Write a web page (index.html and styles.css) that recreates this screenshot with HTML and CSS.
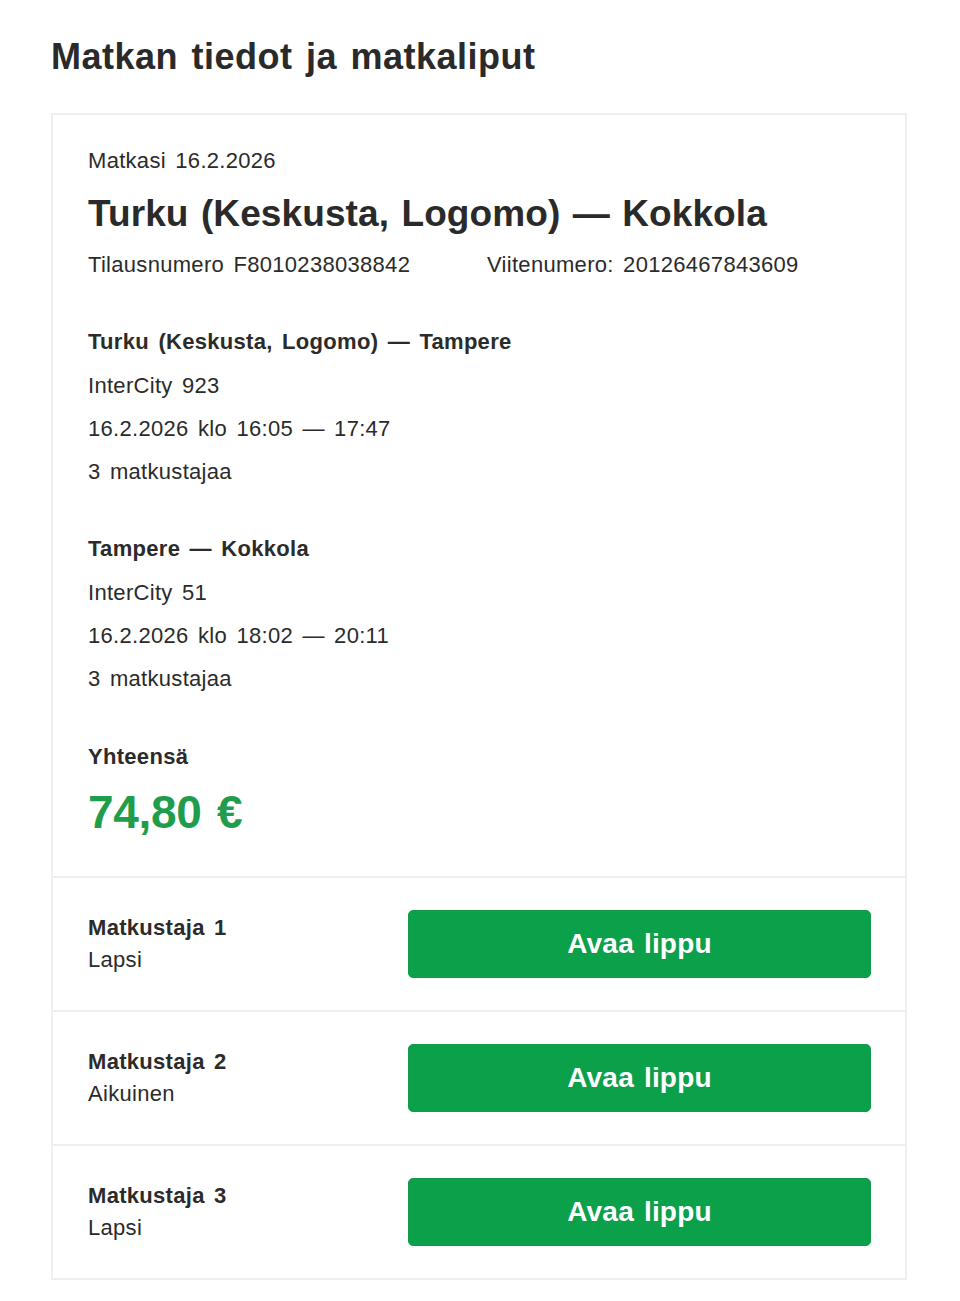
FILE: index.html
```html
<!DOCTYPE html>
<html lang="fi">
<head>
<meta charset="utf-8">
<title>Matkan tiedot ja matkaliput</title>
<link rel="stylesheet" href="styles.css">
</head>
<body>
<main class="page">
  <h1 class="page-title">Matkan tiedot ja matkaliput</h1>
  <section class="card">
    <div class="summary">
      <div class="trip-date">Matkasi 16.2.2026</div>
      <h2 class="trip-route">Turku (Keskusta, Logomo) — Kokkola</h2>
      <div class="refs">
        <span class="ref-order">Tilausnumero F8010238038842</span>
        <span class="ref-ref">Viitenumero: 20126467843609</span>
      </div>

      <div class="leg">
        <div class="leg-title">Turku (Keskusta, Logomo) — Tampere</div>
        <div class="leg-line">InterCity 923</div>
        <div class="leg-line">16.2.2026 klo 16:05 — 17:47</div>
        <div class="leg-line">3 matkustajaa</div>
      </div>

      <div class="leg">
        <div class="leg-title">Tampere — Kokkola</div>
        <div class="leg-line">InterCity 51</div>
        <div class="leg-line">16.2.2026 klo 18:02 — 20:11</div>
        <div class="leg-line">3 matkustajaa</div>
      </div>

      <div class="total">
        <div class="total-label">Yhteensä</div>
        <div class="total-price">74,80 €</div>
      </div>
    </div>

    <div class="passenger">
      <div class="passenger-info">
        <div class="passenger-name">Matkustaja 1</div>
        <div class="passenger-type">Lapsi</div>
      </div>
      <button class="ticket-btn" type="button">Avaa lippu</button>
    </div>
    <div class="passenger">
      <div class="passenger-info">
        <div class="passenger-name">Matkustaja 2</div>
        <div class="passenger-type">Aikuinen</div>
      </div>
      <button class="ticket-btn" type="button">Avaa lippu</button>
    </div>
    <div class="passenger">
      <div class="passenger-info">
        <div class="passenger-name">Matkustaja 3</div>
        <div class="passenger-type">Lapsi</div>
      </div>
      <button class="ticket-btn" type="button">Avaa lippu</button>
    </div>
  </section>
</main>
</body>
</html>
```

FILE: styles.css
```css
* { box-sizing: border-box; }

html, body {
  margin: 0;
  padding: 0;
  background: #ffffff;
}

body {
  font-family: "Liberation Sans", Arial, sans-serif;
  color: #2b2b2b;
  letter-spacing: 0.3px;
  word-spacing: 3px;
}

.page {
  width: 856px;
  margin-left: 51px;
  padding-top: 34px;
  padding-bottom: 21px;
}

.page-title {
  margin: 0 0 33px 0;
  font-size: 36px;
  line-height: 46px;
  font-weight: 700;
  color: #2a2a2a;
  letter-spacing: 0.5px;
}

.card {
  border: 2px solid #efefef;
  background: #fff;
}

.summary {
  padding: 33px 34px 36px 35px;
}

.trip-date {
  font-size: 22px;
  line-height: 26px;
}

.trip-route {
  margin: 18px 0 0 0;
  font-size: 37px;
  line-height: 44px;
  font-weight: 700;
  color: #2a2a2a;
  letter-spacing: 0.1px;
  word-spacing: 2px;
}

.refs {
  display: flex;
  margin-top: 16px;
  font-size: 22px;
  line-height: 26px;
}

.ref-order {
  width: 399px;
}

.leg {
  margin-top: 51px;
}

.leg-title {
  font-size: 22px;
  line-height: 26px;
  font-weight: 700;
  margin-bottom: 18px;
}

.leg-line {
  font-size: 22px;
  line-height: 26px;
  margin-bottom: 17px;
}

.leg-line:last-child {
  margin-bottom: 0;
}

.total {
  margin-top: 52px;
}

.total-label {
  font-size: 22px;
  line-height: 26px;
  font-weight: 700;
}

.total-price {
  margin-top: 14px;
  font-size: 46px;
  line-height: 56px;
  font-weight: 700;
  color: #1f9d4c;
  letter-spacing: -0.3px;
}

.passenger {
  display: flex;
  align-items: center;
  justify-content: space-between;
  height: 134px;
  padding: 0 34px 0 35px;
  border-top: 2px solid #efefef;
}

.passenger-name {
  font-size: 22px;
  line-height: 32px;
  font-weight: 700;
}

.passenger-type {
  font-size: 22px;
  line-height: 32px;
}

.ticket-btn {
  width: 463px;
  height: 68px;
  border: 1px solid #129a4a;
  border-radius: 5px;
  background: #0ba04a;
  color: #ffffff;
  font-family: "Liberation Sans", Arial, sans-serif;
  font-size: 28px;
  font-weight: 700;
  letter-spacing: 0.2px;
  word-spacing: 2px;
  cursor: pointer;
}
```
